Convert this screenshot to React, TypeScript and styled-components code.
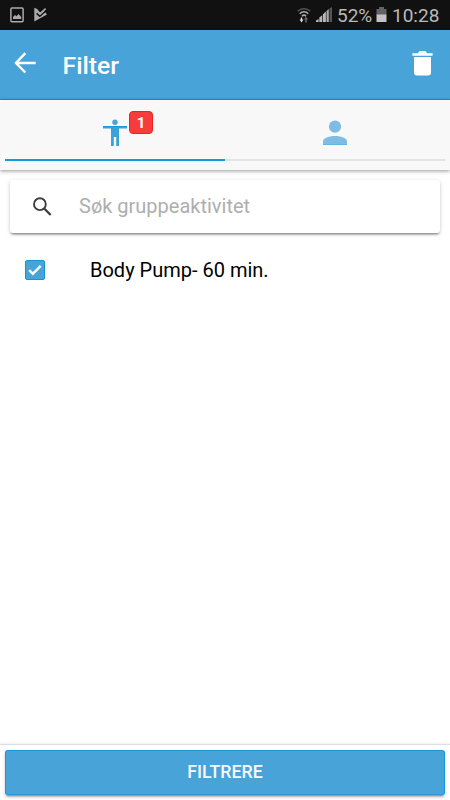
import React from "react";
import styled, { createGlobalStyle } from "styled-components";

const GlobalStyle = createGlobalStyle`
  *, *::before, *::after { box-sizing: border-box; }
  body { margin: 0; background: #fff; font-family: Roboto, "Noto Sans", sans-serif; }
  svg { display: block; flex: none; }
`;

const Screen = styled.div`
  display: flex;
  flex-direction: column;
  width: 450px;
  height: 800px;
  overflow: hidden;
  background: #fff;
`;

const StatusBar = styled.div`
  display: flex;
  align-items: center;
  justify-content: space-between;
  height: 30px;
  padding: 0 11px 0 10px;
  background: #111;
  color: #b9b9b9;
`;

const StatusGroup = styled.div<{ $gap: number }>`
  display: flex;
  align-items: center;
  gap: ${(p) => p.$gap}px;
  height: 30px;
`;

const StatusText = styled.span<{ $width: number; $size: number }>`
  width: ${(p) => p.$width}px;
  font-size: ${(p) => p.$size}px;
  line-height: 30px;
  padding-top: 2px;
  white-space: nowrap;
`;

const Header = styled.header`
  display: flex;
  align-items: center;
  height: 70px;
  padding: 0 17px 0 14px;
  background: #48a3d9;
  border-bottom: 1px solid #1596d6;
  color: #fff;
`;

const IconButton = styled.button<{ $raised?: boolean }>`
  display: flex;
  padding: 0 0 ${(p) => (p.$raised ? 3 : 0)}px;
  border: 0;
  background: none;
  color: inherit;
`;

const Title = styled.h1`
  flex: 1;
  margin: 2px 0 0 26.5px;
  font-size: 24.8px;
  font-weight: 500;
  line-height: 30px;
`;

const Tabs = styled.nav`
  display: flex;
  height: 70px;
  padding: 0 5px 9px;
  background: #f8f8f8;
  box-shadow: 0 1px 4px rgba(0, 0, 0, 0.42);
`;

const Tab = styled.button<{ $active?: boolean }>`
  display: flex;
  flex: 1;
  justify-content: center;
  padding: 19px 0 0;
  border: 0;
  border-bottom: 2px solid ${(p) => (p.$active ? "#149bdb" : "#e3e3e3")};
  background: none;
  color: ${(p) => (p.$active ? "#48a3d9" : "#7ebce2")};
`;

const IconAnchor = styled.span`
  position: relative;
  height: 28px;
`;

const Badge = styled.span`
  position: absolute;
  left: 26px;
  top: -8px;
  width: 24px;
  height: 23px;
  border: 1px solid #ef2026;
  border-radius: 4px;
  background: #f73c3c;
  color: #fff;
  font-family: Roboto, sans-serif;
  font-size: 15px;
  font-weight: 700;
  line-height: 22px;
  text-align: center;
`;

const Content = styled.main`
  flex: 1;
  padding: 10px 10px 0;
`;

const SearchBar = styled.div`
  display: flex;
  align-items: center;
  height: 53px;
  padding-left: 22px;
  border-radius: 3px;
  background: #fff;
  box-shadow: 0 3px 2px -2px rgba(0, 0, 0, 0.3), 0 2px 2px rgba(0, 0, 0, 0.16),
    0 1px 5px rgba(0, 0, 0, 0.14);
`;

const SearchInput = styled.input`
  flex: 1;
  height: 40px;
  margin-left: 27px;
  padding: 0 0 2px;
  border: 0;
  outline: 0;
  background: none;
  font: 400 20px/30px Roboto, sans-serif;
  &::placeholder { color: #aeaeae; opacity: 1; }
`;

const Option = styled.label`
  display: flex;
  align-items: center;
  height: 74px;
  padding-left: 15px;
  color: #000;
  font-size: 20px;
`;

const CheckBox = styled.span`
  display: flex;
  align-items: center;
  justify-content: center;
  width: 20px;
  height: 20px;
  margin-right: 45px;
  border: 1px solid #1994d2;
  border-radius: 2px;
  background: #48a3d9;
`;

const Footer = styled.footer`
  height: 56px;
  padding: 5px 5px 0;
  border-top: 1px solid #dedede;
  box-shadow: 0 -1px 2px rgba(0, 0, 0, 0.06);
`;

const SubmitButton = styled.button`
  display: block;
  width: 440px;
  height: 45px;
  padding: 0 0 1px;
  border: 1px solid #1b97d3;
  border-bottom-color: #2f98d2;
  border-radius: 3px;
  background: #48a3d9;
  box-shadow: 0 3px 2px -2px rgba(0, 0, 0, 0.3), 0 2px 3px rgba(0, 0, 0, 0.25);
  color: #f6fbfe;
  font: 500 17.8px/42px Roboto, sans-serif;
  text-align: center;
`;

const PhotoIcon = () => (
  <svg width="14" height="16" viewBox="0 0 14 16">
    <rect x="0.9" y="1" width="12.2" height="13.8" rx="1" fill="none" stroke="#aaa" strokeWidth="1.5" />
    <path d="M3 12V10l2-2 1.5 1.2L8.5 7l2.7 3v2z" fill="#aaa" />
  </svg>
);

const PlayCheckIcon = () => (
  <svg width="14" height="16" viewBox="0 0 14 16">
    <path d="M0.3 0.7 3.2 2 6 5.6 9.5 3.3 13 7.4 0.3 14.6z" fill="#aaa" />
    <path d="m2.6 6.4 3.2 2.8 6.6-6" fill="none" stroke="#111" strokeWidth="1.5" />
    <path d="m4.4 5.2 1.7 1.7 5.5-5.2" fill="none" stroke="#aaa" strokeWidth="1.6" />
  </svg>
);

const WifiIcon = () => (
  <svg width="14" height="17" viewBox="0 0 14 17" fill="none">
    <path d="M.8 4.2C4 .8 10 .8 13.2 4.2" stroke="#555" strokeWidth="1.5" />
    <path d="M2.7 6.7c2.4-2.5 6.2-2.5 8.6 0M4.9 9.2c1.4-1.4 2.8-1.4 4.2 0" stroke="#aaa" strokeWidth="1.5" />
    <path d="M2.6 12.4h1.2v-2h1.4v2h1.2l-1.9 3z" fill="#ddd" />
    <path d="M7 12.5 9 9.5l2 3H9.8v3H8.2v-3z" fill="#666" />
  </svg>
);

const SignalIcon = () => (
  <svg width="16" height="16" viewBox="0 0 16 16">
    <path d="M0 15v-1.5L2.6 12v3zM3.3 15v-4.5L6.2 8.2V15zM6.9 15V7.2l3-2.7V15z" fill="#b5b5b5" />
    <path d="M10.5 15V4l2.3-1.9V15z" fill="#aaa" />
    <path d="M13.5 15V1.6L16 0v15z" fill="#555" />
  </svg>
);

const BatteryIcon = () => (
  <svg width="11" height="16" viewBox="0 0 11 16">
    <path d="M3 0h5v2h2.5v6H.5V2H3z" fill="#626262" />
    <path d="M.5 7.5h10V15H.5z" fill="#c2c2c2" />
  </svg>
);

const BackIcon = () => (
  <svg width="22" height="22" viewBox="0 0 22 22" fill="none">
    <path d="M21.7 11H2M11.3 1.2 2 11l9.3 9.5" stroke="#fff" strokeWidth="2.4" />
  </svg>
);

const TrashIcon = () => (
  <svg width="21" height="26" viewBox="0 0 21 26" fill="#fff">
    <path d="M.4 3.2h5.5L7.5 1h6l1.6 2.2h5.5v2.5H.4zM2 7h17v15.5a3 3 0 0 1-3 3H5a3 3 0 0 1-3-3z" />
  </svg>
);

const BodyIcon = () => (
  <svg width="24" height="28" viewBox="0 0 24 28">
    <circle cx="12" cy="3.2" r="2.7" fill="#48a3d9" />
    <path d="M0 7h24v2.6h-8V27h-2.8v-9h-2.4v9H8V9.6H0z" fill="#3ba1d9" />
    <path d="M0 7.5h24" stroke="#159bdc" />
  </svg>
);

const PersonIcon = () => (
  <svg width="24" height="26" viewBox="0 0 24 26">
    <circle cx="12" cy="7.6" r="6.1" fill="#7ebce2" />
    <path d="M0 26v-3.8C0 18.8 7.5 17 12 17s12 1.8 12 5.2V26z" fill="#7ebce2" />
    <path d="M0 25.5h24" stroke="#62b5e5" />
  </svg>
);

const SearchIcon = () => (
  <svg width="20" height="20" viewBox="0 0 20 20" fill="none" stroke="#3d3d3d">
    <circle cx="7.9" cy="7.2" r="5.9" strokeWidth="1.9" />
    <path d="m11.7 11 7 7" strokeWidth="2.3" />
  </svg>
);

const CheckIcon = () => (
  <svg width="14" height="12" viewBox="0 0 14 12" fill="none">
    <path d="m1.2 6.1 3.7 3.7 7.8-8" stroke="#fff" strokeWidth="2.5" />
  </svg>
);

export default function App() {
  return (
    <Screen>
      <GlobalStyle />
      <StatusBar>
        <StatusGroup $gap={10}>
          <PhotoIcon />
          <PlayCheckIcon />
        </StatusGroup>
        <StatusGroup $gap={5}>
          <WifiIcon />
          <SignalIcon />
          <StatusText $width={34} $size={19}>52%</StatusText>
          <BatteryIcon />
          <StatusText $width={47} $size={19}>10:28</StatusText>
        </StatusGroup>
      </StatusBar>
      <Header>
        <IconButton aria-label="Back" $raised><BackIcon /></IconButton>
        <Title>Filter</Title>
        <IconButton aria-label="Clear" $raised><TrashIcon /></IconButton>
      </Header>
      <Tabs>
        <Tab $active>
          <IconAnchor>
            <BodyIcon />
            <Badge>1</Badge>
          </IconAnchor>
        </Tab>
        <Tab>
          <IconAnchor><PersonIcon /></IconAnchor>
        </Tab>
      </Tabs>
      <Content>
        <SearchBar>
          <SearchIcon />
          <SearchInput placeholder="Søk gruppeaktivitet" />
        </SearchBar>
        <Option>
          <CheckBox><CheckIcon /></CheckBox>
          Body Pump- 60 min.
        </Option>
      </Content>
      <Footer>
        <SubmitButton>FILTRERE</SubmitButton>
      </Footer>
    </Screen>
  );
}
